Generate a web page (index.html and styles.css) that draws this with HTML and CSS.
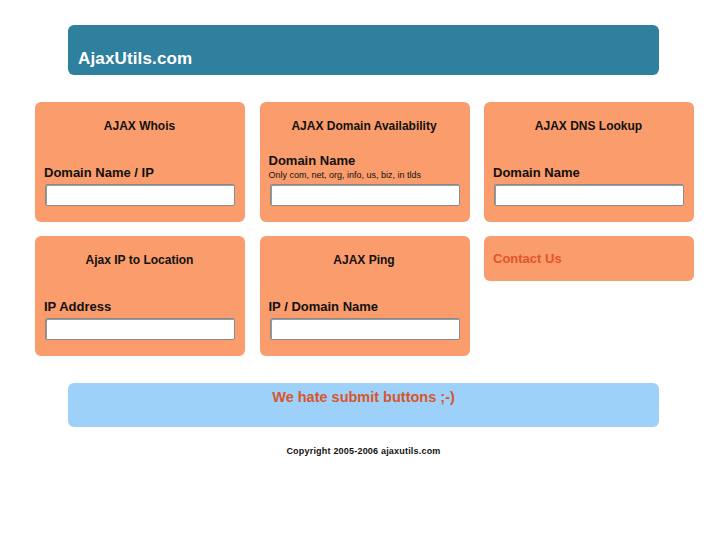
FILE: index.html
```html
<!DOCTYPE html>
<html lang="en">
<head>
  <meta charset="UTF-8">
  <title>AjaxUtils.com</title>
  <link rel="stylesheet" href="styles.css">
</head>
<body>

  <div class="header">AjaxUtils.com</div>

  <div class="tools">
    <div class="card">
      <div class="card-title">AJAX Whois</div>
      <div class="field">
        <label class="label">Domain Name / IP</label>
        <input type="text" class="box">
      </div>
    </div>

    <div class="card">
      <div class="card-title">AJAX Domain Availability</div>
      <div class="field">
        <label class="label label-hint">Domain Name</label>
        <div class="hint">Only com, net, org, info, us, biz, in tlds</div>
        <input type="text" class="box">
      </div>
    </div>

    <div class="card">
      <div class="card-title">AJAX DNS Lookup</div>
      <div class="field">
        <label class="label">Domain Name</label>
        <input type="text" class="box">
      </div>
    </div>

    <div class="card">
      <div class="card-title">Ajax IP to Location</div>
      <div class="field">
        <label class="label">IP Address</label>
        <input type="text" class="box">
      </div>
    </div>

    <div class="card">
      <div class="card-title">AJAX Ping</div>
      <div class="field">
        <label class="label">IP / Domain Name</label>
        <input type="text" class="box">
      </div>
    </div>

    <div class="card card-small">
      <a class="contact" href="#">Contact Us</a>
    </div>
  </div>

  <div class="result">We hate submit buttons ;-)</div>

  <div class="footer">Copyright 2005-2006 ajaxutils.com</div>

</body>
</html>
```

FILE: styles.css
```css
body {
  margin: 0;
  font-family: "Liberation Sans", Arial, sans-serif;
  background: #fff;
  color: #111;
}

.header {
  margin: 25px 0 0 68px;
  width: 581px;
  height: 50px;
  padding-left: 10px;
  box-sizing: content-box;
  display: flex;
  align-items: flex-end;
  background-color: #2f7f9f;
  border-radius: 6px;
  color: white;
  font-size: 17px;
  font-weight: bold;
  line-height: 32px;
  letter-spacing: 0.15px;
}

.tools {
  display: grid;
  grid-template-columns: repeat(3, 210px);
  column-gap: 14.5px;
  row-gap: 14px;
  align-items: start;
  margin: 27px 0 0 35px;
}

.card {
  height: 120px;
  box-sizing: border-box;
  padding: 17px 10px 16px 9px;
  background-color: #fa9c6c;
  border-radius: 6px;
  display: flex;
  flex-direction: column;
}

.card-title {
  text-align: center;
  font-size: 12px;
  font-weight: bold;
  line-height: 14px;
}

.field {
  margin-top: auto;
}

.label {
  display: block;
  font-size: 13px;
  font-weight: bold;
  line-height: 15px;
  margin-bottom: 4px;
}

.label-hint {
  margin-bottom: 2px;
}

.hint {
  font-size: 9px;
  line-height: 11px;
  margin-bottom: 3px;
}

.box {
  display: block;
  width: 190px;
  height: 22px;
  margin-left: 1px;
  box-sizing: border-box;
  border: 1px solid #8a8a8a;
  border-radius: 2px;
  box-shadow: inset 1px 1px 0 #9a9a9a;
  background: white;
}

.card-small {
  height: 45px;
  padding-top: 15px;
}

.contact {
  color: #e2552a;
  font-size: 13px;
  font-weight: bold;
  line-height: 15px;
  text-decoration: none;
}

.result {
  margin: 27px 0 0 68px;
  width: 591px;
  height: 44px;
  box-sizing: border-box;
  padding-top: 5px;
  background-color: #9dd1fa;
  border-radius: 6px;
  text-align: center;
  color: #d9552a;
  font-size: 14.5px;
  font-weight: bold;
  line-height: 18px;
}

.footer {
  margin-top: 18px;
  width: 727px;
  text-align: center;
  font-size: 9px;
  font-weight: bold;
  line-height: 12px;
  letter-spacing: 0.2px;
}
```
